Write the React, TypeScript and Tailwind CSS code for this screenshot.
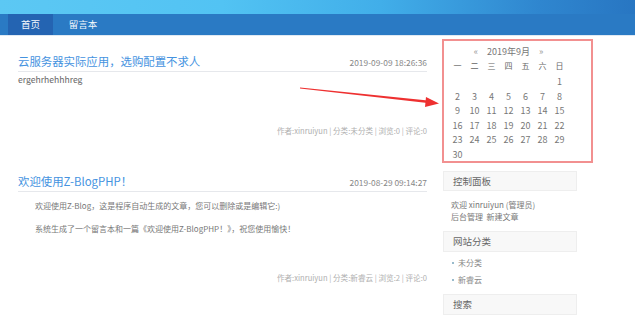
import React from "react";

const font = { fontFamily: '"Noto Sans CJK SC", "Noto Sans", sans-serif' };

function Post({ title, date, children, meta, bodyH }: { title: string; date: string; children: React.ReactNode; meta: string; bodyH: string }) {
  return (
    <div>
      <div className="flex items-end justify-between border-b border-[#e6e8ec] pb-[1px]">
        <div className="text-[11.4px] leading-[17px] text-[#4593df]">{title}</div>
        <div className="text-[8.4px] leading-[14px] text-[#888] mb-[1px]">{date}</div>
      </div>
      <div className={bodyH}>{children}</div>
      <div className="text-right text-[7.6px] leading-[12px] text-[#b0b0b0]">{meta}</div>
    </div>
  );
}

export default function App() {
  const days: (number | null)[] = [null, null, null, null, null, null, 1];
  for (let i = 2; i <= 30; i++) days.push(i);
  while (days.length % 7) days.push(null);
  const rows: (number | null)[][] = [];
  for (let i = 0; i < days.length; i += 7) rows.push(days.slice(i, i + 7));
  const week = ["一", "二", "三", "四", "五", "六", "日"];

  return (
    <div className="relative w-[635px] h-[318px] overflow-hidden bg-white" style={font}>
      <div className="h-[14px] bg-[linear-gradient(90deg,#5cc8f3_0%,#52c3f3_35%,#41aee9_60%,#2f86cf_85%,#2876c2_100%)]" />
      <div className="h-[21px] bg-[#2a7ac4] flex">
        <div className="ml-[8px] w-[45px] bg-[#2464b2] flex items-center justify-center text-[#f4f8fc] text-[9.5px]">首页</div>
        <div className="w-[60px] flex items-center justify-center text-[#f4f8fc] text-[9.5px]">留言本</div>
      </div>
      <div className="h-[1px] bg-[#dfe9f3]" />
      <div className="flex">
        <div className="w-[437px] pl-[18px] pr-[10px] pt-[17px]">
          <Post title="云服务器实际应用，选购配置不求人" date="2019-09-09 18:26:36" meta="作者:xinruiyun | 分类:未分类 | 浏览:0 | 评论:0" bodyH="h-[52px]">
            <div className="text-[8.6px] leading-[12px] text-[#666] mt-[1px]">ergehrhehhhreg</div>
          </Post>
          <div className="h-[36px]" />
          <Post title="欢迎使用Z-BlogPHP！" date="2019-08-29 09:14:27" meta="作者:xinruiyun | 分类:新睿云 | 浏览:2 | 评论:0" bodyH="h-[80px] pl-[17px] pt-[8px]">
            <div className="text-[8px] leading-[12px] text-[#777]">欢迎使用Z-Blog，这是程序自动生成的文章，您可以删除或是编辑它:)</div>
            <div className="text-[8px] leading-[12px] text-[#777] mt-[11px]">系统生成了一个留言本和一篇《欢迎使用Z-BlogPHP！》，祝您使用愉快！</div>
          </Post>
        </div>
        <div className="pl-[5px] pt-[3px]">
          <div className="w-[151px] h-[124px] border-2 border-[#f29090] pl-[5px] pt-[5px]">
            <div className="w-[119px] text-center text-[9px] leading-[12px] text-[#777]">
              <span className="text-[#999]">«</span>
              <span className="mx-[9px]">2019年9月</span>
              <span className="text-[#999]">»</span>
            </div>
            <div className="grid grid-cols-7 w-[119px] mt-[1px] text-[8px] leading-[14px] text-[#666] text-center">
              {week.map((w) => (
                <div key={w}>{w}</div>
              ))}
            </div>
            <div className="mt-[2px]">
              {rows.map((r, ri) => (
                <div key={ri} className="grid grid-cols-7 w-[119px] h-[14.6px] text-[9px] leading-[14.6px] text-[#777] text-center">
                  {r.map((d, di) => (
                    <div key={di}>{d ?? ""}</div>
                  ))}
                </div>
              ))}
            </div>
          </div>
          <div className="mt-[8px] ml-[1px] w-[134px] h-[20px] bg-[#f8f8f8] border border-[#eeeeee] flex items-center pl-[9px] text-[9.5px] text-[#666]">控制面板</div>
          <div className="pl-[9px] pt-[8px] text-[8px] leading-[12px] text-[#777]">
            <div>欢迎 xinruiyun (管理员)</div>
            <div>后台管理&nbsp;&nbsp;新建文章</div>
          </div>
          <div className="mt-[8px] ml-[1px] w-[134px] h-[21px] bg-[#f8f8f8] border border-[#eeeeee] flex items-center pl-[9px] text-[9.5px] text-[#666]">网站分类</div>
          <div className="pl-[10px] pt-[5px] text-[8px] leading-[12px] text-[#888]">
            <div className="flex items-center gap-[4px]"><span className="w-[2px] h-[2px] bg-[#9bc]" />未分类</div>
            <div className="flex items-center gap-[4px] mt-[5px]"><span className="w-[2px] h-[2px] bg-[#9bc]" />新睿云</div>
          </div>
          <div className="mt-[8px] ml-[1px] w-[134px] h-[21px] bg-[#f8f8f8] border border-[#eeeeee] flex items-center pl-[9px] text-[9.5px] text-[#666]">搜索</div>
        </div>
      </div>
      <svg className="absolute left-0 top-0 pointer-events-none" width="635" height="318">
        <polygon points="300,87.5 428,100.5 427.5,103 300,88.5" fill="#ee3030" />
        <polygon points="426,97 439,103.5 425,107" fill="#ee3030" />
      </svg>
    </div>
  );
}
